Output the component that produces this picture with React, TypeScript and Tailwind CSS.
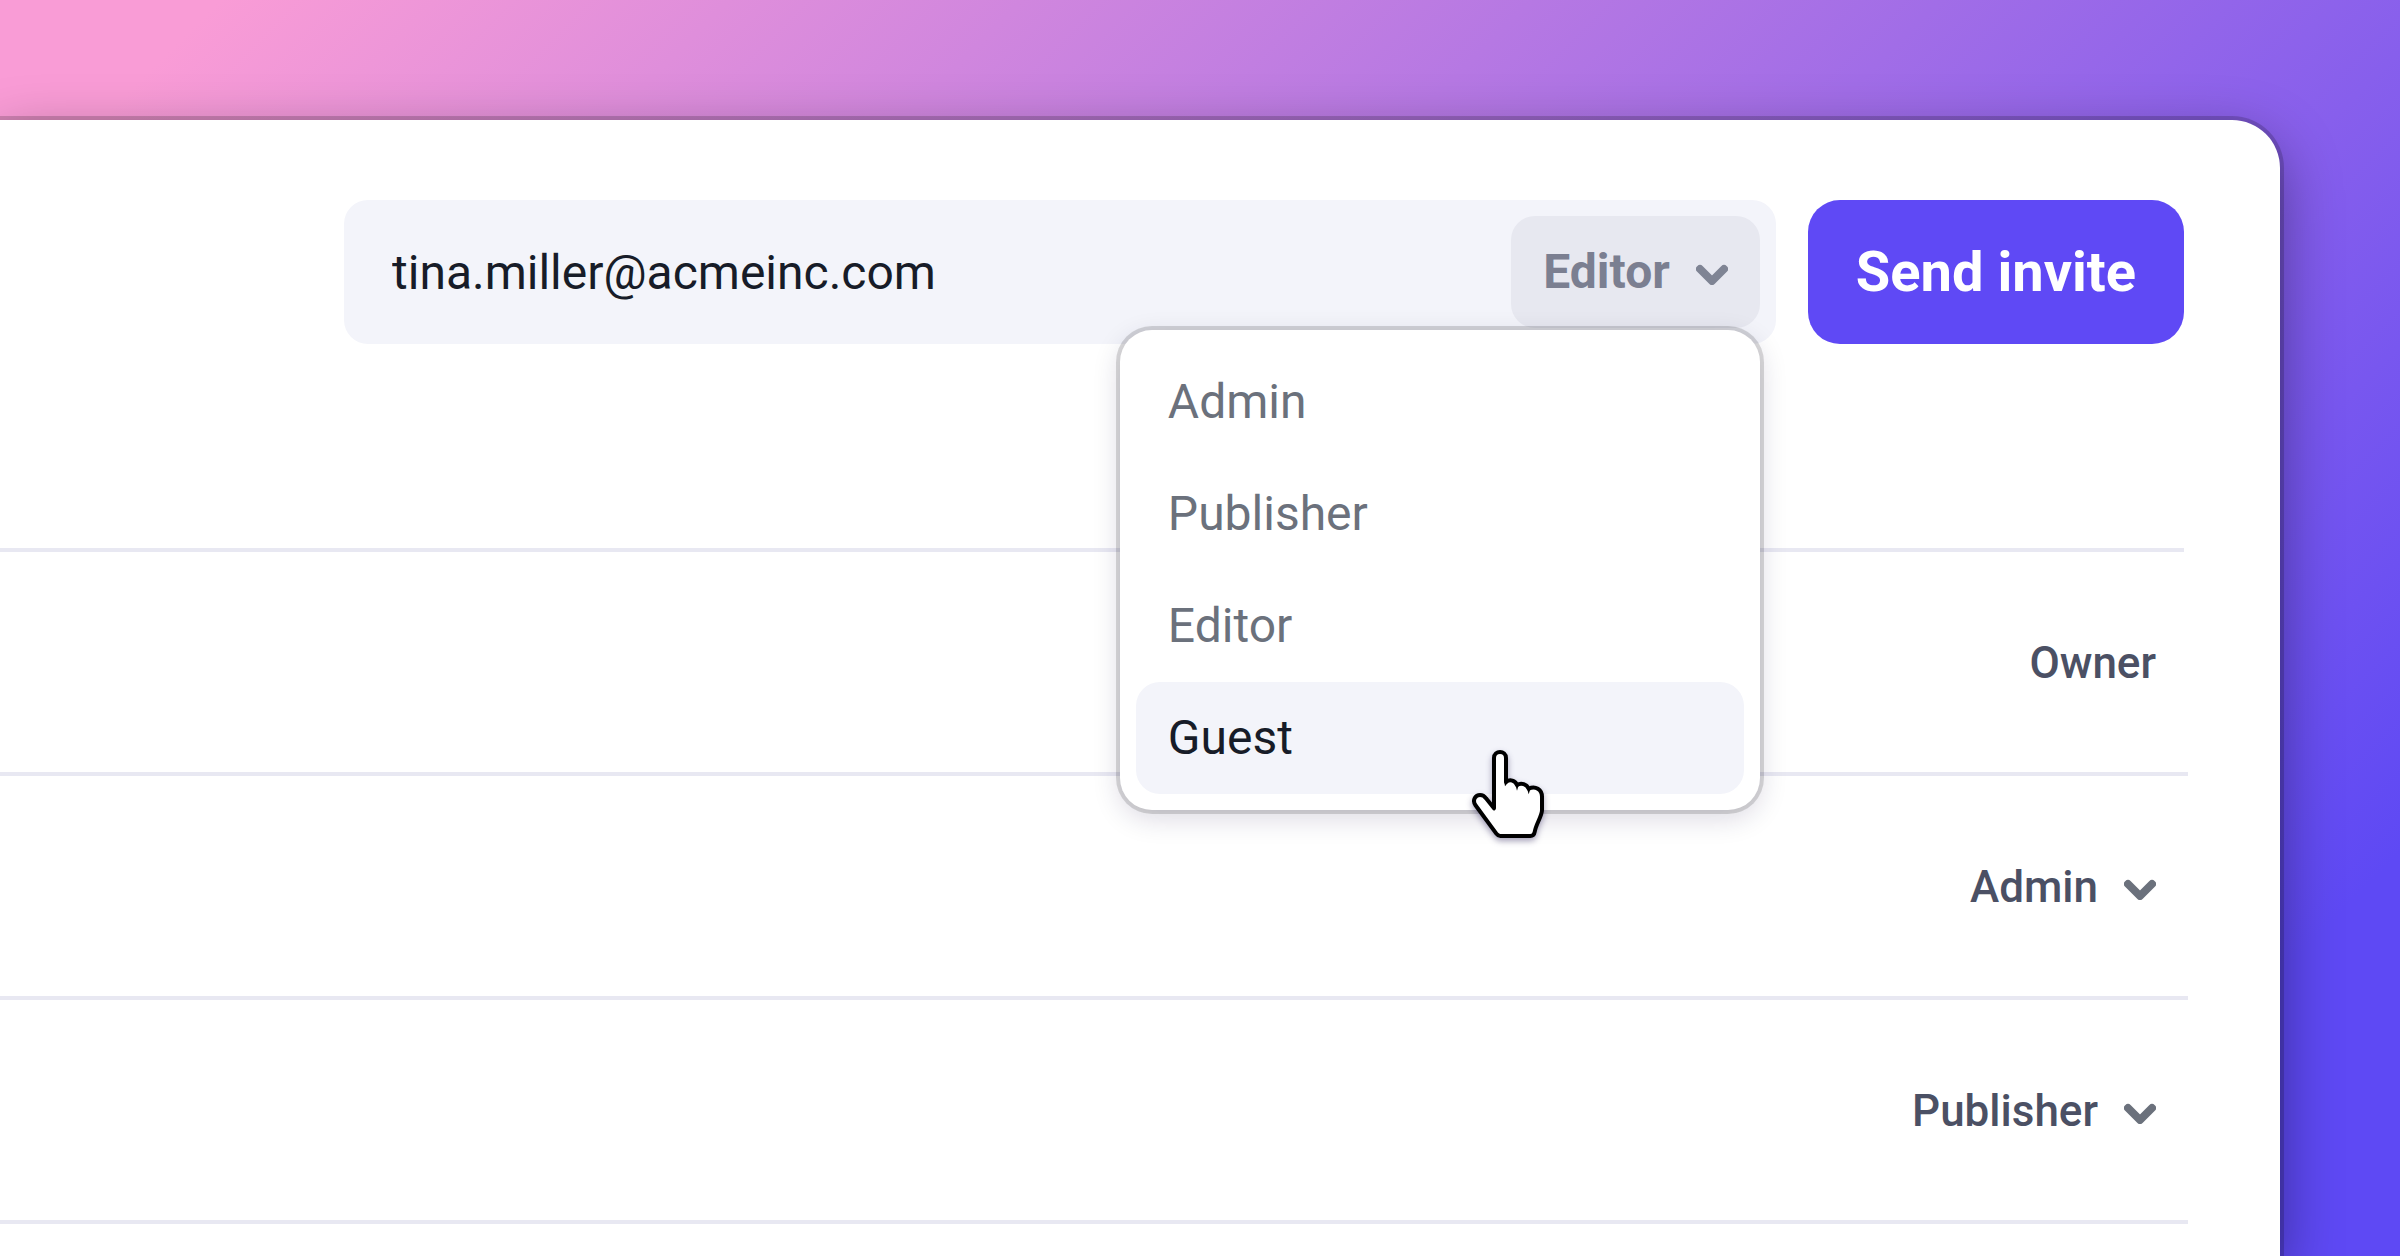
import * as React from "react";

const roles = ["Admin", "Publisher", "Editor", "Guest"] as const;

const members = [
  { id: 1, role: "Owner",     locked: true  },
  { id: 2, role: "Admin",     locked: false },
  { id: 3, role: "Publisher", locked: false },
];

function Chevron({ className }: { className: string }) {
  return (
    <svg
      viewBox="0 0 32 26"
      fill="none"
      stroke="currentColor"
      strokeWidth={8}
      strokeLinecap="round"
      strokeLinejoin="round"
      aria-hidden="true"
      className={`w-8 h-[26px] shrink-0 pointer-events-none ${className}`}
    >
      <path d="M4 10l12 12 12-12" />
    </svg>
  );
}

function HandPointer() {
  return (
    <svg
      viewBox="90 84 228 282"
      aria-hidden="true"
      className="top-[66px] left-[334px] z-20 absolute drop-shadow-[0_3px_3px_rgba(30,20,80,0.4)] w-[76px] h-[94px] overflow-visible pointer-events-none"
    >
      <path
        d="M162 265V114C162 90 198 90 198 114V186C210 176 226 182 231 195C244 187 260 193 266 206C286 196 306 208 306 230V270C306 288 288 312 284 336Q282 348 271 348H181Q174 348 169 341L106 255C96 239 107 225 120 225C128 225 134 229 138 235Z"
        fill="#fff"
        stroke="#000"
        strokeWidth={12}
        strokeLinejoin="round"
      />
      {/* Creases between the fingers */}
      <path d="M193 186L195 199L206 185ZM225 190L231 212L237 192ZM260 202L266 223L272 204Z" fill="#000" />
    </svg>
  );
}

function RoleMenu({ active }: { active: string }) {
  return (
    <ul
      role="listbox"
      aria-label="Role"
      className="top-full right-0 z-10 absolute bg-white shadow-[0_0_0_4px_rgba(0,0,0,0.14),0_8px_28px_rgba(25,15,70,0.16)] mt-0.5 p-4 rounded-[32px] w-[640px]"
    >
      {roles.map((role) => (
        <li key={role} role="option" aria-selected={role === active} className="relative">
          <button
            type="button"
            className={[
              "px-8 rounded-3xl w-full h-28 text-[48px] text-left leading-[56px]",
              role === active ? "bg-[#f3f4fa] text-[#171c28]" : "text-[#6b717c]",
            ].join(" ")}
          >
            {role}
          </button>
          {role === active && <HandPointer />}
        </li>
      ))}
    </ul>
  );
}

function InviteForm() {
  const [email, setEmail] = React.useState("tina.miller@acmeinc.com");

  return (
    <form className="flex gap-8 pl-[344px]" onSubmit={(e) => e.preventDefault()}>
      <div className="flex flex-1 items-center bg-[#f3f4fa] pr-4 rounded-3xl min-w-0 h-36">
        <input
          type="email"
          aria-label="Email address"
          value={email}
          onChange={(e) => setEmail(e.target.value)}
          className="flex-1 bg-transparent px-12 outline-none min-w-0 h-full text-[#171c28] text-[48px]"
        />
        <div className="relative">
          <button
            type="button"
            aria-haspopup="listbox"
            aria-expanded="true"
            className="flex items-center gap-[26px] bg-[#e7e8f0] px-8 rounded-3xl h-28 font-bold text-[#7b7f91] text-[48px] leading-[56px]"
          >
            Editor
            <Chevron className="text-[#7f8494]" />
          </button>
          <RoleMenu active="Guest" />
        </div>
      </div>
      <button
        type="submit"
        className="bg-[#5f49f5] px-12 rounded-[32px] h-36 font-bold text-[56px] text-white whitespace-nowrap"
      >
        Send invite
      </button>
    </form>
  );
}

export default function App() {
  return (
    <div className="flex bg-[linear-gradient(135deg,#f99cd6_6%,#5e49f4_89%)] pt-[120px] pr-[120px] min-h-screen overflow-hidden font-['Roboto',sans-serif]">
      <main className="flex-1 bg-white shadow-[0_0_0_4px_rgba(0,0,0,0.17),0_20px_60px_rgba(0,0,0,0.4)] pt-20 pr-24 rounded-tr-[48px] min-w-0">
        <header className="border-[#e8e8f2] border-b-4 pb-[204px]">
          <InviteForm />
        </header>

        {/* Members */}
        <ul className="-mr-1">
          {members.map((m) => (
            <li
              key={m.id}
              className="flex justify-end items-center border-[#e8e8f2] border-b-4 pt-0.5 pr-8 h-56 font-medium text-[#4b5064] text-[44px] leading-[52px]"
            >
              {m.locked ? (
                <span>{m.role}</span>
              ) : (
                <label className="flex items-center gap-[26px]">
                  <select
                    aria-label="Member role"
                    defaultValue={m.role}
                    className="bg-transparent outline-none appearance-none field-sizing-content"
                  >
                    {roles.map((role) => (
                      <option key={role}>{role}</option>
                    ))}
                  </select>
                  <Chevron className="text-[#6b717c]" />
                </label>
              )}
            </li>
          ))}
        </ul>
      </main>
    </div>
  );
}
